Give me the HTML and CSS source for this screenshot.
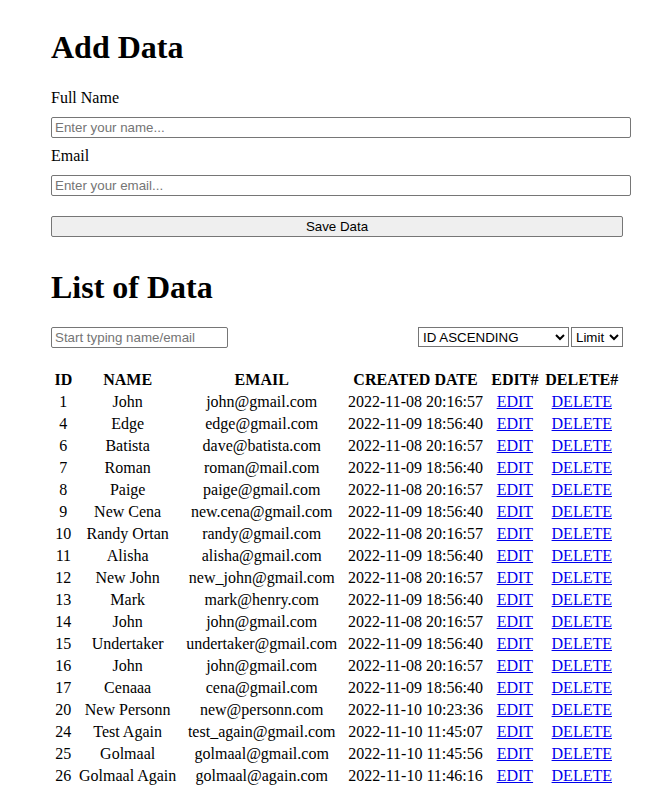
FILE: index.html
```html
<!DOCTYPE html>
<html>
<head>
<meta charset="utf-8">
<title>Data</title>
<link rel="stylesheet" href="styles.css">
</head>
<body>
<div class="container">
  <h1 class="title title-add">Add Data</h1>
  <form class="form">
    <label class="label">Full Name</label>
    <input class="text-input" type="text" placeholder="Enter your name...">
    <label class="label label-email">Email</label>
    <input class="text-input" type="text" placeholder="Enter your email...">
    <button class="save-btn" type="button">Save Data</button>
  </form>
  <h1 class="title title-list">List of Data</h1>
  <div class="toolbar">
    <input class="search" type="text" placeholder="Start typing name/email">
    <div class="selects">
      <select class="sort"><option>ID ASCENDING</option></select>
      <select class="limit"><option>Limit</option></select>
    </div>
  </div>
  <table class="data-table">
    <thead>
      <tr><th>ID</th><th>NAME</th><th>EMAIL</th><th>CREATED DATE</th><th>EDIT#</th><th>DELETE#</th></tr>
    </thead>
    <tbody>
      <tr><td>1</td><td>John</td><td>john@gmail.com</td><td>2022-11-08 20:16:57</td><td><a href="#">EDIT</a></td><td><a href="#">DELETE</a></td></tr>
      <tr><td>4</td><td>Edge</td><td>edge@gmail.com</td><td>2022-11-09 18:56:40</td><td><a href="#">EDIT</a></td><td><a href="#">DELETE</a></td></tr>
      <tr><td>6</td><td>Batista</td><td>dave@batista.com</td><td>2022-11-08 20:16:57</td><td><a href="#">EDIT</a></td><td><a href="#">DELETE</a></td></tr>
      <tr><td>7</td><td>Roman</td><td>roman@mail.com</td><td>2022-11-09 18:56:40</td><td><a href="#">EDIT</a></td><td><a href="#">DELETE</a></td></tr>
      <tr><td>8</td><td>Paige</td><td>paige@gmail.com</td><td>2022-11-08 20:16:57</td><td><a href="#">EDIT</a></td><td><a href="#">DELETE</a></td></tr>
      <tr><td>9</td><td>New Cena</td><td>new.cena@gmail.com</td><td>2022-11-09 18:56:40</td><td><a href="#">EDIT</a></td><td><a href="#">DELETE</a></td></tr>
      <tr><td>10</td><td>Randy Ortan</td><td>randy@gmail.com</td><td>2022-11-08 20:16:57</td><td><a href="#">EDIT</a></td><td><a href="#">DELETE</a></td></tr>
      <tr><td>11</td><td>Alisha</td><td>alisha@gmail.com</td><td>2022-11-09 18:56:40</td><td><a href="#">EDIT</a></td><td><a href="#">DELETE</a></td></tr>
      <tr><td>12</td><td>New John</td><td>new_john@gmail.com</td><td>2022-11-08 20:16:57</td><td><a href="#">EDIT</a></td><td><a href="#">DELETE</a></td></tr>
      <tr><td>13</td><td>Mark</td><td>mark@henry.com</td><td>2022-11-09 18:56:40</td><td><a href="#">EDIT</a></td><td><a href="#">DELETE</a></td></tr>
      <tr><td>14</td><td>John</td><td>john@gmail.com</td><td>2022-11-08 20:16:57</td><td><a href="#">EDIT</a></td><td><a href="#">DELETE</a></td></tr>
      <tr><td>15</td><td>Undertaker</td><td>undertaker@gmail.com</td><td>2022-11-09 18:56:40</td><td><a href="#">EDIT</a></td><td><a href="#">DELETE</a></td></tr>
      <tr><td>16</td><td>John</td><td>john@gmail.com</td><td>2022-11-08 20:16:57</td><td><a href="#">EDIT</a></td><td><a href="#">DELETE</a></td></tr>
      <tr><td>17</td><td>Cenaaa</td><td>cena@gmail.com</td><td>2022-11-09 18:56:40</td><td><a href="#">EDIT</a></td><td><a href="#">DELETE</a></td></tr>
      <tr><td>20</td><td>New Personn</td><td>new@personn.com</td><td>2022-11-10 10:23:36</td><td><a href="#">EDIT</a></td><td><a href="#">DELETE</a></td></tr>
      <tr><td>24</td><td>Test Again</td><td>test_again@gmail.com</td><td>2022-11-10 11:45:07</td><td><a href="#">EDIT</a></td><td><a href="#">DELETE</a></td></tr>
      <tr><td>25</td><td>Golmaal</td><td>golmaal@gmail.com</td><td>2022-11-10 11:45:56</td><td><a href="#">EDIT</a></td><td><a href="#">DELETE</a></td></tr>
      <tr><td>26</td><td>Golmaal Again</td><td>golmaal@again.com</td><td>2022-11-10 11:46:16</td><td><a href="#">EDIT</a></td><td><a href="#">DELETE</a></td></tr>
    </tbody>
  </table>
</div>
</body>
</html>
```

FILE: styles.css
```css
html, body {
  font-family: "Liberation Serif", "Times New Roman", serif;
  font-size: 16px;
  color: #000;
  background: #fff;
}
body {
  margin: 8px;
  overflow: hidden;
}
.container {
  display: flow-root;
  width: 572px;
  margin-left: 43px;
  padding-top: 1px;
}
.title {
  font-size: 32px;
  font-weight: bold;
  margin: 20.44px 0 21.44px;
}
.title-add {
  margin-bottom: 22.44px;
}
.form {
  margin: 0;
}
.label {
  display: block;
  line-height: 18px;
  margin-bottom: 10px;
}
.label-email {
  margin-top: 9px;
}
.text-input {
  display: block;
  box-sizing: border-box;
  width: 580px;
  height: 21px;
  margin: 0;
  padding: 1px 3px;
  font-family: "Liberation Sans", Arial, sans-serif;
  font-size: 13.33px;
  border: 1px solid #767676;
  border-radius: 2px;
}
.text-input::placeholder, .search::placeholder {
  color: #757575;
}
.save-btn {
  display: block;
  width: 572px;
  height: 21px;
  margin-top: 20px;
  font-family: "Liberation Sans", Arial, sans-serif;
  font-size: 13.33px;
  background: #efefef;
  border: 1px solid #767676;
  border-radius: 2px;
  color: #000;
  padding: 1px 6px;
}
.title-list {
  margin-top: 32px;
}
.toolbar {
  display: flex;
  justify-content: space-between;
  align-items: flex-start;
}
.search {
  box-sizing: border-box;
  width: 177px;
  height: 21px;
  margin: 0;
  padding: 1px 3px;
  font-family: "Liberation Sans", Arial, sans-serif;
  font-size: 13.33px;
  border: 1px solid #767676;
  border-radius: 2px;
}
.selects {
  display: flex;
  gap: 2px;
}
.sort, .limit {
  box-sizing: border-box;
  height: 20px;
  margin: 0;
  font-family: "Liberation Sans", Arial, sans-serif;
  font-size: 13.33px;
  border: 1px solid #767676;
  border-radius: 0;
  background: #fff;
  color: #000;
}
.sort {
  width: 151px;
}
.limit {
  width: 52px;
}
.data-table {
  width: 100%;
  margin-top: 20px;
  text-align: center;
  border-spacing: 2px;
}
.data-table th, .data-table td {
  padding: 1px;
  line-height: 18px;
}
.data-table a {
  color: #0000ee;
}
```
